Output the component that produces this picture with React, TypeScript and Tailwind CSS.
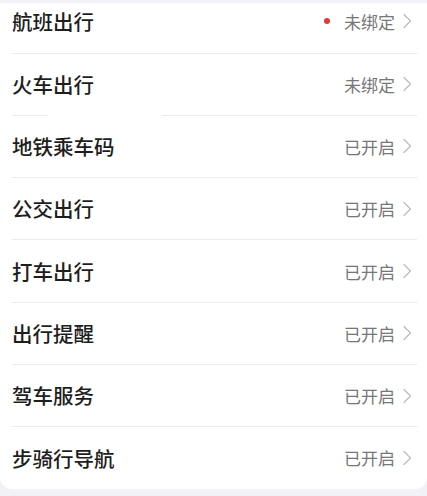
const rows = [
  { title: '航班出行', status: '未绑定', dot: true },
  { title: '火车出行', status: '未绑定', gap: true },
  { title: '地铁乘车码', status: '已开启' },
  { title: '公交出行', status: '已开启' },
  { title: '打车出行', status: '已开启' },
  { title: '出行提醒', status: '已开启' },
  { title: '驾车服务', status: '已开启' },
  { title: '步骑行导航', status: '已开启' },
]

function Chevron() {
  return (
    <svg width="10" height="16" viewBox="0 0 10 16" fill="none" className="shrink-0">
      <path d="M2 1.5 L8.5 8 L2 14.5" stroke="#bdbdbd" strokeWidth="1.3" strokeLinecap="round" strokeLinejoin="round" />
    </svg>
  )
}

export default function App() {
  return (
    <div
      className="w-[427px] h-[496px] bg-[#f2f2f6] pt-[3px] overflow-hidden"
      style={{ fontFamily: '"Noto Sans CJK SC", "Noto Sans", sans-serif' }}
    >
      <div className="bg-white rounded-b-xl">
        {rows.map((row, i) => (
          <div key={row.title}>
            <div
              className={`flex items-center pl-3 pr-[15px] ${i === 0 ? 'h-[49.5px] pb-[13px]' : 'h-[61.3px]'}`}
            >
              <span className="flex-1 text-[20.5px] leading-none font-medium text-[#1e1e1e]">{row.title}</span>
              {row.dot && <span className="w-[6px] h-[6px] rounded-full bg-[#e0393a] mr-[14px]" />}
              <span className="text-[17px] leading-none text-[#777777] mr-[7px]">{row.status}</span>
              <Chevron />
            </div>
            {i < rows.length - 1 &&
              (row.gap ? (
                <div className="flex px-3 pr-[10px]">
                  <div className="w-[36px] h-px bg-[#ebebeb]" />
                  <div className="w-[114px]" />
                  <div className="flex-1 h-px bg-[#ebebeb]" />
                </div>
              ) : (
                <div className="ml-3 mr-[10px] h-px bg-[#ebebeb]" />
              ))}
          </div>
        ))}
      </div>
    </div>
  )
}
